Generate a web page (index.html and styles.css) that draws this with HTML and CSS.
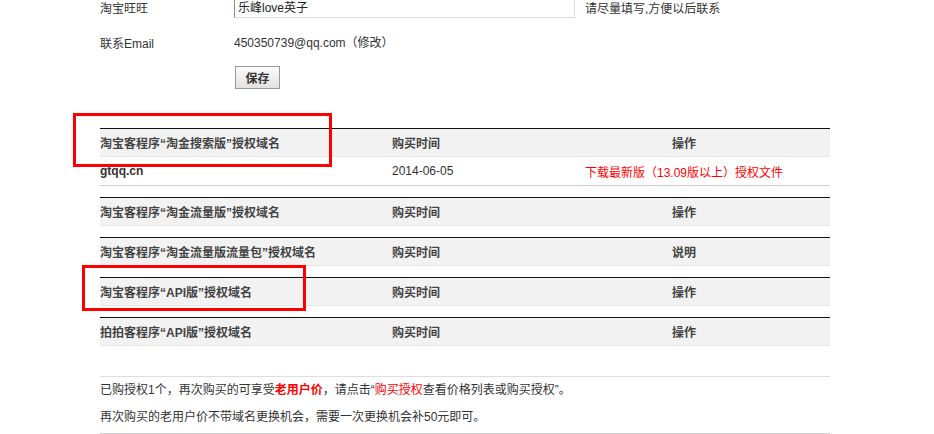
FILE: index.html
```html
<!DOCTYPE html>
<html lang="zh-CN">
<head>
    <meta charset="UTF-8">
    <title>授权域名</title>
    <link rel="stylesheet" href="styles.css">
</head>
<body>
    <div class="page">
        <div class="form">
            <div class="form-row">
                <label class="form-label">淘宝旺旺</label>
                <input class="text-input" type="text" value="乐峰love英子">
                <span class="hint">请尽量填写,方便以后联系</span>
            </div>
            <div class="form-row">
                <label class="form-label">联系Email</label>
                <span class="value">450350739@qq.com（修改）</span>
            </div>
            <div class="form-row">
                <span class="form-label"></span>
                <button class="btn">保存</button>
            </div>
        </div>

        <table class="lic">
            <tr class="head">
                <th class="c1">淘宝客程序“淘金搜索版”授权域名</th>
                <th class="c2">购买时间</th>
                <th class="c3">操作</th>
            </tr>
            <tr class="data">
                <td class="c1 domain">gtqq.cn</td>
                <td class="c2">2014-06-05</td>
                <td class="c3"><a class="red" href="#">下载最新版（13.09版以上）授权文件</a></td>
            </tr>
        </table>

        <table class="lic">
            <tr class="head">
                <th class="c1">淘宝客程序“淘金流量版”授权域名</th>
                <th class="c2">购买时间</th>
                <th class="c3">操作</th>
            </tr>
        </table>

        <table class="lic">
            <tr class="head">
                <th class="c1">淘宝客程序“淘金流量版流量包”授权域名</th>
                <th class="c2">购买时间</th>
                <th class="c3">说明</th>
            </tr>
        </table>

        <table class="lic">
            <tr class="head">
                <th class="c1">淘宝客程序“API版”授权域名</th>
                <th class="c2">购买时间</th>
                <th class="c3">操作</th>
            </tr>
        </table>

        <table class="lic">
            <tr class="head">
                <th class="c1">拍拍客程序“API版”授权域名</th>
                <th class="c2">购买时间</th>
                <th class="c3">操作</th>
            </tr>
        </table>

        <div class="notes">
            <p>已购授权1个，再次购买的可享受<b class="red">老用户价</b>，请点击“<a class="red" href="#">购买授权</a>查看价格列表或购买授权”。</p>
            <p>再次购买的老用户价不带域名更换机会，需要一次更换机会补50元即可。</p>
        </div>
    </div>

    <div class="mark mark-1"></div>
    <div class="mark mark-2"></div>
</body>
</html>
```

FILE: styles.css
```css
body {
    margin: 0;
    font-family: "Liberation Sans", "Noto Sans CJK SC", sans-serif;
    font-size: 12px;
    color: #333;
    background: #fff;
}
.page {
    width: 730px;
    margin-left: 100px;
}
.form {
    margin-top: -10px;
}
.form-row {
    display: flex;
    align-items: center;
    height: 35px;
}
.form-label {
    width: 134px;
    flex: none;
}
.text-input {
    width: 341px;
    height: 24px;
    margin-top: -4px;
    box-sizing: border-box;
    padding: 4px 3px 2px;
    border: 1px solid #ddd;
    border-top-color: #888;
    border-left-color: #888;
    font-family: "Liberation Sans", "Noto Sans CJK SC", sans-serif;
    font-size: 12px;
    color: #222;
}
.hint {
    margin-left: 10px;
}
.value {
    margin-top: -2px;
}
.btn {
    width: 45px;
    height: 23px;
    margin-left: 1px;
    padding: 0;
    border: 1px solid #999;
    background: linear-gradient(#fbfbfb, #e2e2e2);
    font-family: "Liberation Sans", "Noto Sans CJK SC", sans-serif;
    font-size: 12px;
    font-weight: bold;
    color: #333;
}
.lic {
    width: 730px;
    border-collapse: collapse;
    border-top: 1px solid #111;
    margin-bottom: 11px;
}
.lic:first-of-type {
    margin-top: 33px;
}
.lic th, .lic td {
    padding: 0;
    text-align: left;
    font-weight: bold;
}
.head th {
    height: 27px;
    background: #f2f2f2;
    border-bottom: 1px solid #e6e6e6;
    color: #444;
}
.data td {
    height: 28px;
    border-bottom: 1px solid #ccc;
    font-weight: normal;
}
.lic .c1 {
    width: 292px;
}
.lic .c2 {
    width: 146px;
}
.lic .c3 {
    text-align: center;
}
.lic .domain {
    font-weight: bold;
}
.red {
    color: #f00;
    text-decoration: none;
}
.notes {
    margin-top: 30px;
    border-top: 1px solid #ddd;
    border-bottom: 1px solid #ccc;
    padding-bottom: 2px;
}
.notes p {
    margin: 0;
    line-height: 27px;
}
.mark {
    position: absolute;
    border: 3px solid #f00;
    box-sizing: border-box;
}
.mark-1 {
    left: 73px;
    top: 113px;
    width: 259px;
    height: 54px;
}
.mark-2 {
    left: 82px;
    top: 265px;
    width: 224px;
    height: 46px;
}
```
